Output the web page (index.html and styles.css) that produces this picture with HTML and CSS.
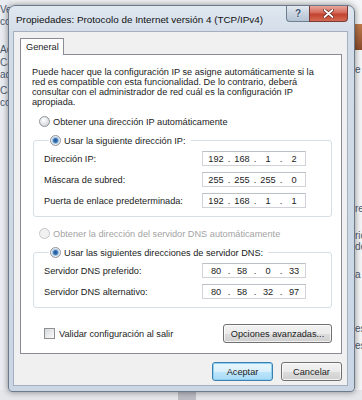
FILE: index.html
```html
<!DOCTYPE html>
<html lang="es">
<head>
    <meta charset="UTF-8">
    <meta name="viewport" content="width=device-width, initial-scale=1.0">
    <title>Propiedades: Protocolo de Internet versión 4 (TCP/IPv4)</title>
    <link rel="stylesheet" href="styles.css">
</head>
<body>
    <div class="desktop">
        <!-- what shows of the windows behind the dialog -->
        <div class="behind behind-left">
            <span class="frag f1">Ve</span>
            <span class="frag f2">co</span>
            <span class="frag f3">Ac</span>
            <span class="frag f4">Ca</span>
            <span class="frag f5">ad</span>
            <span class="frag f6">Ca</span>
            <span class="frag f7">co</span>
        </div>
        <div class="behind behind-right">
            <span class="picture"></span>
            <span class="frag r1">e</span>
            <span class="frag r2">re</span>
            <span class="frag r3">ric</span>
            <span class="frag r4">de</span>
            <span class="frag r5">a</span>
            <span class="frag r6">es</span>
            <span class="frag r7">es</span>
        </div>
        <div class="behind behind-bottom"><span class="tab-stub"></span></div>

        <div class="window">
            <div class="titlebar">
                <span class="title">Propiedades: Protocolo de Internet versión 4 (TCP/IPv4)</span>
                <div class="caption-buttons">
                    <span class="cap-btn help">?</span>
                    <span class="cap-btn close">
                        <svg width="11" height="9" viewBox="0 0 11 9">
                            <path d="M1.5 1 L9.5 8 M9.5 1 L1.5 8" stroke="#5b1e1a" stroke-width="3.2" stroke-linecap="round"/>
                            <path d="M1.5 1 L9.5 8 M9.5 1 L1.5 8" stroke="#ffffff" stroke-width="1.8" stroke-linecap="round"/>
                        </svg>
                    </span>
                </div>
            </div>

            <div class="client">
                <div class="tabs">
                    <span class="tab">General</span>
                </div>
                <div class="tab-panel">
                    <p class="intro">Puede hacer que la configuración IP se asigne automáticamente si la<br>red es compatible con esta funcionalidad. De lo contrario, deberá<br>consultar con el administrador de red cuál es la configuración IP<br>apropiada.</p>

                    <div class="option"><span class="radio"></span>Obtener una dirección IP automáticamente</div>

                    <fieldset class="group">
                        <legend><span class="radio checked"></span>Usar la siguiente dirección IP:</legend>
                        <div class="field-row">
                            <span>Dirección IP:</span>
                            <span class="ip-box"><span>192</span><i>.</i><span>168</span><i>.</i><span>1</span><i>.</i><span>2</span></span>
                        </div>
                        <div class="field-row">
                            <span>Máscara de subred:</span>
                            <span class="ip-box"><span>255</span><i>.</i><span>255</span><i>.</i><span>255</span><i>.</i><span>0</span></span>
                        </div>
                        <div class="field-row">
                            <span>Puerta de enlace predeterminada:</span>
                            <span class="ip-box"><span>192</span><i>.</i><span>168</span><i>.</i><span>1</span><i>.</i><span>1</span></span>
                        </div>
                    </fieldset>

                    <div class="option disabled"><span class="radio"></span>Obtener la dirección del servidor DNS automáticamente</div>

                    <fieldset class="group dns">
                        <legend><span class="radio checked"></span>Usar las siguientes direcciones de servidor DNS:</legend>
                        <div class="field-row">
                            <span>Servidor DNS preferido:</span>
                            <span class="ip-box"><span>80</span><i>.</i><span>58</span><i>.</i><span>0</span><i>.</i><span>33</span></span>
                        </div>
                        <div class="field-row">
                            <span>Servidor DNS alternativo:</span>
                            <span class="ip-box"><span>80</span><i>.</i><span>58</span><i>.</i><span>32</span><i>.</i><span>97</span></span>
                        </div>
                    </fieldset>

                    <div class="panel-footer">
                        <div class="option"><span class="check"></span>Validar configuración al salir</div>
                        <button class="btn advanced">Opciones avanzadas...</button>
                    </div>
                </div>

                <div class="dialog-buttons">
                    <button class="btn default">Aceptar</button>
                    <button class="btn">Cancelar</button>
                </div>
            </div>
        </div>
    </div>
</body>
</html>
```

FILE: styles.css
```css
/* Windows 7 style dialog over a desktop */
body {
    margin: 0;
    font-family: "Liberation Sans", Arial, sans-serif;
    font-size: 9.2px;
    color: #1b1b1b;
    background-color: #eef0f3;
}

.desktop {
    position: relative;
    width: 362px;
    height: 400px;
    overflow: hidden;
    background-color: #f1f2f4;
}

/* Windows behind */
.behind {
    position: absolute;
    font-size: 10px;
    color: #4b5a70;
}

.behind-left {
    left: 0;
    top: 0;
    width: 12px;
    height: 400px;
    background-color: #e9ecf0;
}

.behind-right {
    right: 0;
    top: 0;
    width: 12px;
    height: 400px;
    background-color: #f4f5f6;
}

.behind-bottom {
    left: 0;
    bottom: 0;
    width: 362px;
    height: 10px;
    background-color: #e4e6e9;
}

.tab-stub {
    position: absolute;
    left: 178px;
    top: 2px;
    width: 18px;
    height: 8px;
    background-color: #b9bcc2;
}

.frag {
    position: absolute;
    left: 0;
}

.f1 { top: 4px; }
.f2 { top: 16px; }
.f3 { top: 44px; }
.f4 { top: 57px; }
.f5 { top: 69px; }
.f6 { top: 85px; }
.f7 { top: 97px; }

.behind-right .frag { left: 5px; }
.r1 { top: 64px; }
.r2 { top: 203px; }
.r3 { top: 230px; }
.r4 { top: 241px; }
.r5 { top: 269px; }
.r6 { top: 323px; }
.r7 { top: 340px; }

.picture {
    position: absolute;
    left: 4px;
    top: 24px;
    width: 8px;
    height: 26px;
    background: linear-gradient(#c07a4a, #8a4b2c);
}

/* Dialog window */
.window {
    position: absolute;
    left: 8px;
    top: 5px;
    width: 347px;
    height: 387px;
    box-sizing: border-box;
    display: flex;
    flex-direction: column;
    padding: 0 6px 5px 4px;
    border: 1px solid #6c7a8c;
    border-radius: 7px 7px 4px 4px;
    background: linear-gradient(#dfe7f0, #d2dce8 30px, #cad6e4);
    box-shadow: 0 0 6px rgba(0, 0, 0, 0.45);
}

.titlebar {
    height: 25px;
    display: flex;
    align-items: flex-start;
    justify-content: space-between;
}

.title {
    margin: 8px 0 0 3px;
    font-size: 9.9px;
    color: #111;
}

.caption-buttons {
    display: flex;
}

.cap-btn {
    height: 16px;
    display: flex;
    align-items: center;
    justify-content: center;
    box-sizing: border-box;
    border: 1px solid #6f7f92;
    border-top: none;
}

.help {
    width: 23px;
    border-radius: 0 0 0 4px;
    border-right: none;
    background: linear-gradient(#e3e9f0, #c8d3df 50%, #b5c3d3);
    color: #36506f;
    font-weight: bold;
    font-size: 10px;
    text-shadow: 0 0 2px #fff;
}

.close {
    width: 39px;
    border-radius: 0 0 4px 0;
    border-color: #7a3a35;
    background: linear-gradient(#e8a79c, #d4685a 45%, #c2432f 55%, #d46a52);
}

.client {
    flex: 1;
    display: flex;
    flex-direction: column;
    background-color: #f0f0f0;
    border: 1px solid #a3afbe;
    padding: 6px 5px 0 6px;
}

/* Tabs */
.tabs {
    display: flex;
    height: 16px;
}

.tab {
    width: 44px;
    box-sizing: border-box;
    padding: 3px 0 0 5px;
    background-color: #fff;
    border: 1px solid #898c95;
    border-bottom: none;
    position: relative;
    z-index: 1;
    height: 17px;
}

.tab-panel {
    height: 300px;
    box-sizing: border-box;
    background-color: #fff;
    border: 1px solid #898c95;
    padding: 12px 9px 0 11px;
}

.intro {
    margin: 0 0 9px 0;
    line-height: 10px;
}

.option {
    display: flex;
    align-items: center;
    height: 11px;
    padding-left: 7px;
}

.option.disabled {
    color: #a3a3a3;
}

.radio {
    width: 9px;
    height: 9px;
    margin-right: 3px;
    border-radius: 50%;
    border: 1px solid #8e9399;
    background: radial-gradient(circle at 40% 35%, #ffffff, #d7dadd 70%, #c8ccd1);
    flex: none;
}

.radio.checked {
    background: radial-gradient(circle, #27528a 0, #3a74b5 2px, #9cc3e6 3px, #e8eef4 4px, #d7dadd);
}

.disabled .radio {
    border-color: #c4c6c9;
    background: #f1f1f1;
}

.check {
    width: 9px;
    height: 9px;
    margin-right: 4px;
    border: 1px solid #8e8f8f;
    background: linear-gradient(135deg, #d6d8db, #fbfbfb);
    flex: none;
}

/* Group boxes */
.group {
    margin: 8px 0 0 1px;
    padding: 5px 25px 8px 10px;
    border: 1px solid #d5dfe5;
    border-radius: 3px;
    display: flex;
    flex-direction: column;
    gap: 6px;
}

.group legend {
    display: flex;
    align-items: center;
    padding: 0 5px 0 1px;
    margin-left: 5px;
    height: 11px;
}

.field-row {
    display: flex;
    align-items: center;
    justify-content: space-between;
    height: 15px;
}

.ip-box {
    width: 104px;
    height: 15px;
    box-sizing: border-box;
    padding: 0 3px;
    display: grid;
    grid-template-columns: 20px 6px 20px 6px 20px 6px 20px;
    align-items: center;
    text-align: center;
    border: 1px solid #cfd3d8;
    border-top-color: #bcc1c7;
    background-color: #fff;
    color: #222;
}

.ip-box i {
    font-style: normal;
}

.group + .option {
    margin-top: 11px;
}

.group.dns {
    margin-top: 8px;
}

.panel-footer {
    display: flex;
    align-items: center;
    justify-content: space-between;
    margin-top: 16px;
}

.panel-footer .option {
    padding-left: 12px;
}

/* Buttons */
.btn {
    font-family: inherit;
    font-size: 9.2px;
    color: #1b1b1b;
    height: 19px;
    padding: 0;
    border: 1px solid #707070;
    border-radius: 3px;
    background: linear-gradient(#f2f2f2, #ebebeb 50%, #dddddd 51%, #cfcfcf);
    box-shadow: inset 0 0 0 1px rgba(255, 255, 255, 0.7);
}

.advanced {
    width: 109px;
}

.dialog-buttons {
    display: flex;
    justify-content: flex-end;
    gap: 8px;
    padding: 8px 0 0 0;
}

.dialog-buttons .btn {
    width: 61px;
}

.btn.default {
    border-color: #3c7fb1;
    background: linear-gradient(#eaf6fd, #d9f0fc 50%, #bee6fd 51%, #a7d9f5);
    box-shadow: inset 0 0 0 1px #8fd0f2;
}
```
